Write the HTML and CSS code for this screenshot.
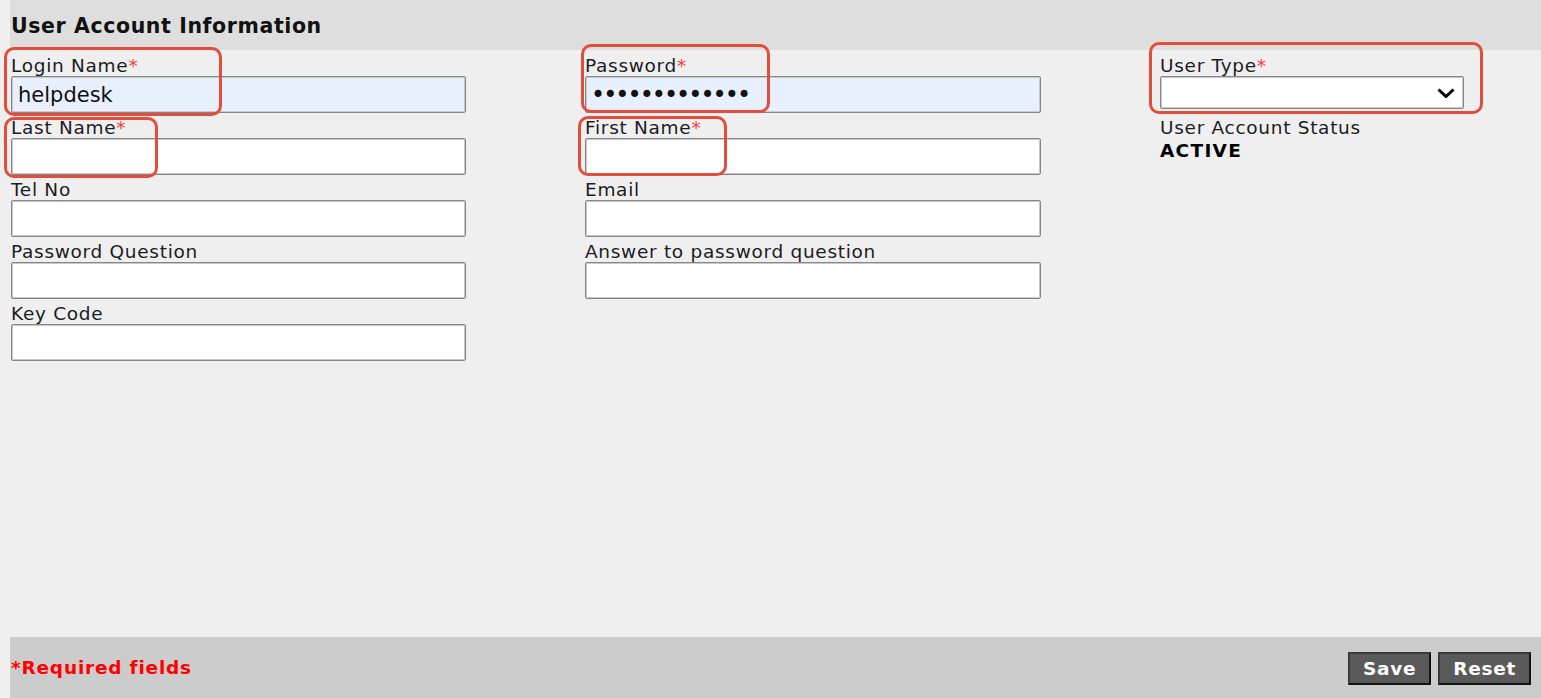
FILE: index.html
```html
<!DOCTYPE html>
<html lang="en">
<head>
<meta charset="utf-8">
<title>User Account Information</title>
<link rel="stylesheet" href="styles.css">
</head>
<body>
<div class="page">
  <div class="section-head">User Account Information</div>
  <div class="form">
    <div class="col col-1">
      <div class="field">
        <label class="label">Login Name<span class="req">*</span></label>
        <input class="input autofill" type="text" value="helpdesk">
      </div>
      <div class="field">
        <label class="label">Last Name<span class="req">*</span></label>
        <input class="input" type="text">
      </div>
      <div class="field">
        <label class="label">Tel No</label>
        <input class="input" type="text">
      </div>
      <div class="field">
        <label class="label">Password Question</label>
        <input class="input" type="text">
      </div>
      <div class="field">
        <label class="label">Key Code</label>
        <input class="input" type="text">
      </div>
    </div>
    <div class="col col-2">
      <div class="field">
        <label class="label">Password<span class="req">*</span></label>
        <input class="input autofill pw" type="password" value="helpdesk12345">
      </div>
      <div class="field">
        <label class="label">First Name<span class="req">*</span></label>
        <input class="input" type="text">
      </div>
      <div class="field">
        <label class="label">Email</label>
        <input class="input" type="text">
      </div>
      <div class="field">
        <label class="label">Answer to password question</label>
        <input class="input" type="text">
      </div>
    </div>
    <div class="col col-3">
      <div class="field field-select">
        <label class="label">User Type<span class="req">*</span></label>
        <div class="select">
          <svg class="chevron" width="18" height="10" viewBox="0 0 18 10"><path d="M1.5 1.5 L9 8.5 L16.5 1.5" fill="none" stroke="#000" stroke-width="3"/></svg>
        </div>
      </div>
      <div class="status-label">User Account Status</div>
      <div class="status-value">ACTIVE</div>
    </div>
  </div>
  <div class="footer">
    <div class="required-note">*Required fields</div>
    <div class="actions">
      <button class="btn" type="button">Save</button>
      <button class="btn" type="button">Reset</button>
    </div>
  </div>
</div>
<div class="mark mark-login"></div>
<div class="mark mark-lastname"></div>
<div class="mark mark-password"></div>
<div class="mark mark-firstname"></div>
<div class="mark mark-usertype"></div>
</body>
</html>
```
FILE: styles.css
```css
html, body {
  margin: 0;
  padding: 0;
}
body {
  position: relative;
  background: #efefef;
  font-family: "DejaVu Sans", Verdana, sans-serif;
  color: #1c1c24;
  min-height: 100vh;
  overflow: hidden;
}
.page {
  margin-left: 10px;
  min-height: 100vh;
  display: flex;
  flex-direction: column;
}
.section-head {
  height: 50px;
  box-sizing: border-box;
  background: #dedede;
  padding: 14px 0 0 1px;
  font-size: 20.5px;
  line-height: 24px;
  font-weight: bold;
  letter-spacing: 0.6px;
  color: #111;
}
.form {
  display: flex;
  padding: 5px 0 0 1px;
}
.col-1 { width: 574px; }
.col-2 { width: 575px; }
.col-3 { flex: 1; }
.field {
  display: flex;
  flex-direction: column;
  margin-bottom: 4px;
}
.label {
  display: block;
  font-size: 18.5px;
  line-height: 21px;
  letter-spacing: 0.7px;
  color: #1c1c24;
}
.req {
  color: #ff3838;
}
.input {
  box-sizing: border-box;
  height: 37px;
  width: 455px;
  margin: 0;
  border: 1px solid #868686;
  box-shadow: inset 0 0 0 1px #c9c9c9;
  border-radius: 2px;
  background: #fff;
  padding: 0 6px;
  font-family: "DejaVu Sans", Verdana, sans-serif;
  font-size: 21px;
  color: #111;
  outline: none;
}
.col-2 .input { width: 456px; }
.input.autofill {
  background: #e8f0fe;
  box-shadow: inset 0 0 0 1px #c4c9d2;
}
.input.pw {
  font-size: 24px;
  letter-spacing: -2px;
  padding-left: 5px;
}
.field-select {
  margin-bottom: 0;
}
.select {
  position: relative;
  box-sizing: border-box;
  width: 304px;
  height: 33px;
  border: 1px solid #868686;
  box-shadow: inset 0 0 0 1px #c9c9c9;
  border-radius: 2px;
  background: #fff;
  margin-bottom: 8px;
  display: flex;
  align-items: center;
  justify-content: flex-end;
  padding-right: 8px;
}
.chevron {
  display: block;
}
.status-label {
  font-size: 18.5px;
  line-height: 21px;
  letter-spacing: 0.7px;
  color: #1c1c24;
}
.status-value {
  margin-top: 2px;
  font-size: 18.5px;
  line-height: 21px;
  font-weight: bold;
  letter-spacing: 1.3px;
  color: #000;
}
.footer {
  margin-top: auto;
  height: 61px;
  box-sizing: border-box;
  background: #cccccc;
  display: flex;
  align-items: center;
  justify-content: space-between;
  padding: 0 10px 0 1px;
}
.required-note {
  color: #ff0000;
  font-weight: bold;
  font-size: 18.5px;
  line-height: 21px;
  letter-spacing: 0.8px;
}
.actions {
  display: flex;
  gap: 7px;
  padding-top: 2px;
}
.btn {
  box-sizing: border-box;
  height: 33px;
  padding: 0 13px;
  background: #5a5a5a;
  color: #fff;
  font-family: "DejaVu Sans", Verdana, sans-serif;
  font-weight: bold;
  font-size: 18.5px;
  letter-spacing: 0.7px;
  border: 2px solid #3a3a3a;
  border-right-color: #111;
  border-bottom-color: #111;
  border-radius: 0;
  cursor: pointer;
}
.mark {
  position: absolute;
  box-sizing: border-box;
  border: 3px solid #e24d3c;
  border-radius: 10px;
  pointer-events: none;
}
.mark-login { left: 4px; top: 47px; width: 218px; height: 69px; }
.mark-lastname { left: 4px; top: 117px; width: 154px; height: 61px; }
.mark-password { left: 581px; top: 44px; width: 189px; height: 69px; }
.mark-firstname { left: 578px; top: 116px; width: 149px; height: 60px; }
.mark-usertype { left: 1149px; top: 42px; width: 334px; height: 72px; }
```
